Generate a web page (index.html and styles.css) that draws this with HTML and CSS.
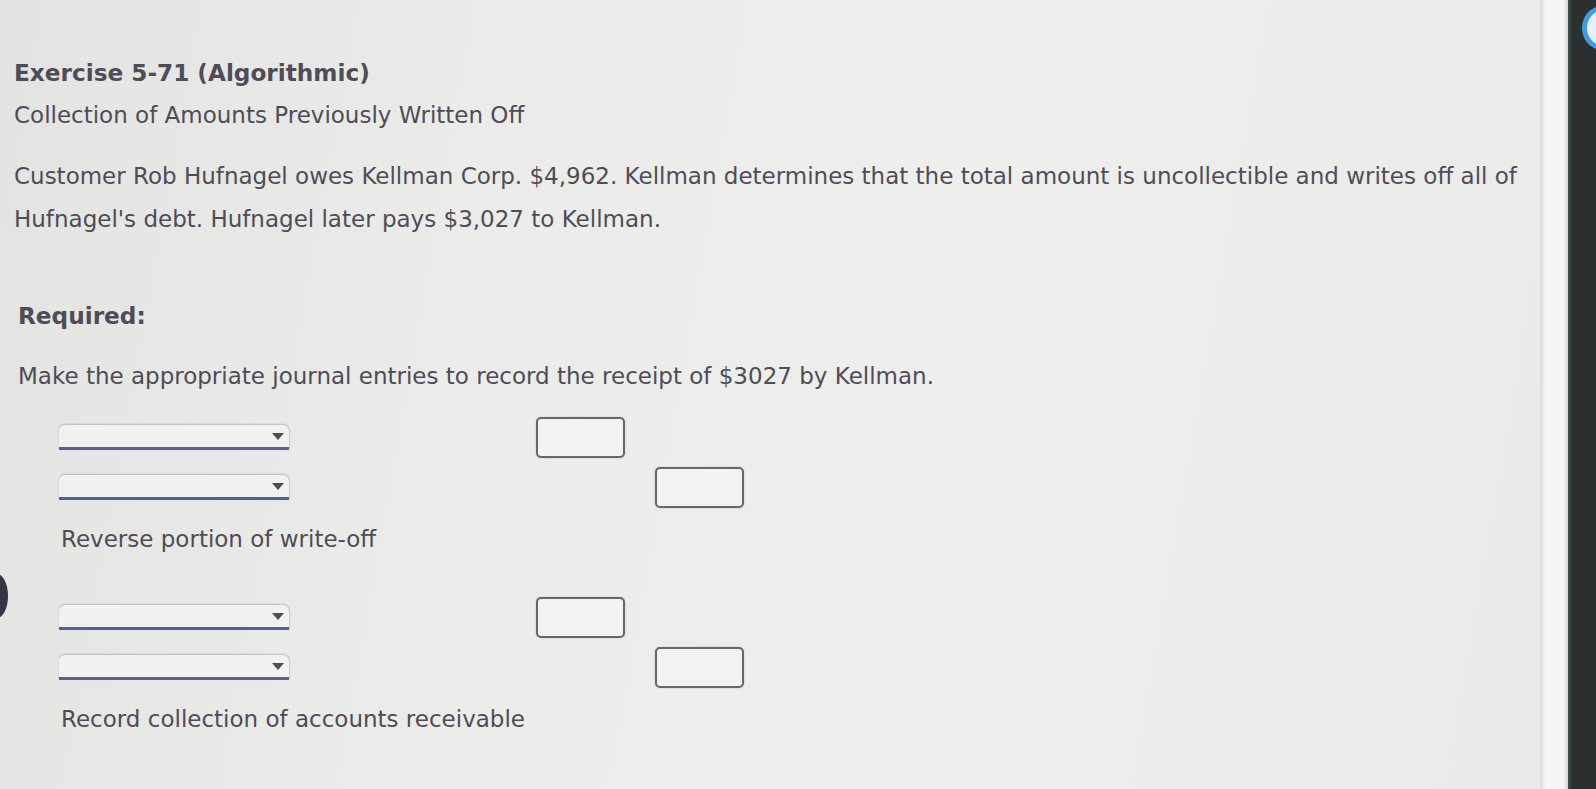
FILE: index.html
```html
<!DOCTYPE html>
<html>
<head>
<meta charset="utf-8">
<link rel="stylesheet" href="styles.css">
</head>
<body>
<div class="screen">
  <main class="page">
    <h1 class="title">Exercise 5-71 (Algorithmic)</h1>
    <p class="subtitle">Collection of Amounts Previously Written Off</p>
    <p class="body-text">Customer Rob Hufnagel owes Kellman Corp. $4,962. Kellman determines that the total amount is uncollectible and writes off all of Hufnagel's debt. Hufnagel later pays $3,027 to Kellman.</p>
    <h2 class="required">Required:</h2>
    <p class="instr">Make the appropriate journal entries to record the receipt of $3027 by Kellman.</p>

    <div class="entry entry-first">
      <div class="row">
        <div class="select"><span class="arrow"></span></div>
        <div class="cell"><div class="box"></div></div>
        <div class="cell"></div>
      </div>
      <div class="row">
        <div class="select"><span class="arrow"></span></div>
        <div class="cell"></div>
        <div class="cell"><div class="box"></div></div>
      </div>
    </div>
    <p class="note">Reverse portion of write-off</p>

    <div class="entry entry-second">
      <div class="row">
        <div class="select"><span class="arrow"></span></div>
        <div class="cell"><div class="box"></div></div>
        <div class="cell"></div>
      </div>
      <div class="row">
        <div class="select"><span class="arrow"></span></div>
        <div class="cell"></div>
        <div class="cell"><div class="box"></div></div>
      </div>
    </div>
    <p class="note">Record collection of accounts receivable</p>

    <div class="blob"></div>
  </main>
  <div class="edge"></div>
  <div class="bezel"><div class="bezel-dot"></div></div>
</div>
</body>
</html>
```

FILE: styles.css
```css
html, body {
  margin: 0;
  padding: 0;
  height: 100%;
}
body {
  font-family: "DejaVu Sans", Verdana, sans-serif;
  color: #4f4c57;
  overflow: hidden;
}
.screen {
  display: flex;
  width: 1596px;
  height: 789px;
}
.page {
  position: relative;
  width: 1540px;
  flex: none;
  box-sizing: border-box;
  padding: 52px 0 0 14px;
  background: linear-gradient(100deg, #e3e3e1 0%, #ebebe9 30%, #eeeeec 60%, #eaeae8 100%);
  overflow: hidden;
}
.title {
  margin: 0;
  font-size: 23.2px;
  font-weight: bold;
  line-height: 42px;
}
.subtitle {
  margin: 0;
  font-size: 23px;
  line-height: 42px;
}
.body-text {
  margin: 19px 0 0 0;
  font-size: 23px;
  line-height: 43px;
  width: 1524px;
}
.required {
  margin: 54px 0 0 4px;
  font-size: 23.2px;
  font-weight: bold;
  line-height: 42px;
}
.instr {
  margin: 18px 0 0 4px;
  font-size: 23px;
  line-height: 42px;
}
.entry {
  margin-left: 45px;
  display: flex;
  flex-direction: column;
  gap: 9px;
}
.entry-first { margin-top: 20px; }
.entry-second { margin-top: 37px; }
.row {
  display: grid;
  grid-template-columns: 477px 119px 89px;
  align-items: center;
  height: 41px;
}
.select {
  position: relative;
  width: 230px;
  height: 25px;
  box-sizing: border-box;
  background: #f1f1ef;
  border-radius: 6px 6px 0 0;
  box-shadow: 0 -1px 2px rgba(0,0,0,0.2), 1px 0 1px rgba(0,0,0,0.08);
  border-bottom: 3px solid #5a5d98;
}
.arrow {
  position: absolute;
  right: 5px;
  top: 8px;
  width: 0;
  height: 0;
  border-left: 6px solid transparent;
  border-right: 6px solid transparent;
  border-top: 7px solid #4f4d55;
}
.box {
  width: 89px;
  height: 41px;
  box-sizing: border-box;
  border: 2px solid #6a646e;
  border-radius: 5px;
  background: #f2f2f0;
  box-shadow: 0 0 2px rgba(0,0,0,0.2);
}
.note {
  margin: 10px 0 0 47px;
  font-size: 23px;
  line-height: 42px;
}
.blob {
  position: absolute;
  left: -14px;
  top: 574px;
  width: 22px;
  height: 44px;
  border-radius: 50%;
  background: #3a3346;
}
.edge {
  width: 28px;
  flex: none;
  background: linear-gradient(90deg, #d8d8d6 0%, #f6f6f4 20%, #f4f4f2 85%, #cfd3d1 100%);
}
.bezel {
  position: relative;
  flex: 1;
  background: linear-gradient(90deg, #3f5552 0%, #2a302f 15%, #2c2f2f 100%);
  overflow: hidden;
}
.bezel-dot {
  position: absolute;
  left: 14px;
  top: 6px;
  width: 30px;
  height: 34px;
  border-radius: 50%;
  border: 5px solid #3b9de6;
  background: #e6eef6;
}
```
